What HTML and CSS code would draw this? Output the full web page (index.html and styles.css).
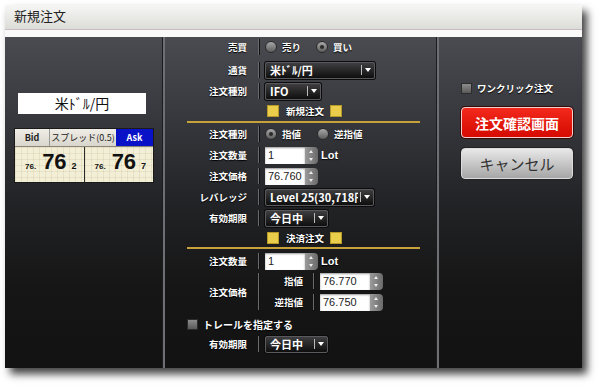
FILE: index.html
```html
<!DOCTYPE html>
<html lang="ja">
<head>
    <meta charset="UTF-8">
    <title>新規注文</title>
    <link rel="stylesheet" href="styles.css">
</head>
<body>
    <div class="window">
        <div class="titlebar">新規注文</div>
        <div class="gap"></div>
        <div class="panel">
            <!-- 左：通貨ペアとレート -->
            <div class="col col-left">
                <div class="pair-box">米ﾄﾞﾙ/円</div>
                <div class="rate">
                    <div class="rate-head">
                        <div class="rh-bid">Bid</div>
                        <div class="rh-spread">スプレッド(0.5)</div>
                        <div class="rh-ask">Ask</div>
                    </div>
                    <div class="rate-body">
                        <div class="rate-cell"><span class="r-small">76.</span><span class="r-big">76</span><span class="r-last">2</span></div>
                        <div class="rate-cell"><span class="r-small">76.</span><span class="r-big">76</span><span class="r-last">7</span></div>
                    </div>
                </div>
            </div>
            <div class="divider"></div>

            <!-- 中央：注文フォーム -->
            <div class="col col-center">
                <div class="row r1">
                    <div class="label">売買</div><div class="sep"></div>
                    <span class="radio"></span><span class="opt">売り</span>
                    <span class="radio on second"></span><span class="opt">買い</span>
                </div>
                <div class="row r2">
                    <div class="label">通貨</div><div class="sep"></div>
                    <div class="select w-pair"><span class="sel-text">米ﾄﾞﾙ/円</span><i class="sel-arrow"></i></div>
                </div>
                <div class="row">
                    <div class="label">注文種別</div><div class="sep"></div>
                    <div class="select w-ifo"><span class="sel-text">IFO</span><i class="sel-arrow"></i></div>
                </div>
                <div class="row section">
                    <span class="ysq"></span><span class="sec-title">新規注文</span><span class="ysq"></span>
                </div>
                <div class="goldline"></div>
                <div class="row">
                    <div class="label">注文種別</div><div class="sep"></div>
                    <span class="radio on"></span><span class="opt">指値</span>
                    <span class="radio second2"></span><span class="opt">逆指値</span>
                </div>
                <div class="row">
                    <div class="label">注文数量</div><div class="sep"></div>
                    <div class="num"><span class="num-val">1</span><span class="spin"></span></div>
                    <span class="unit">Lot</span>
                </div>
                <div class="row">
                    <div class="label">注文価格</div><div class="sep"></div>
                    <div class="num"><span class="num-val">76.760</span><span class="spin"></span></div>
                </div>
                <div class="row">
                    <div class="label">レバレッジ</div><div class="sep"></div>
                    <div class="select w-lev"><span class="sel-text">Level 25(30,718円)</span><i class="sel-arrow"></i></div>
                </div>
                <div class="row">
                    <div class="label">有効期限</div><div class="sep"></div>
                    <div class="select w-day"><span class="sel-text">今日中</span><i class="sel-arrow"></i></div>
                </div>
                <div class="row section s2">
                    <span class="ysq"></span><span class="sec-title">決済注文</span><span class="ysq"></span>
                </div>
                <div class="goldline"></div>
                <div class="row r11">
                    <div class="label">注文数量</div><div class="sep"></div>
                    <div class="num"><span class="num-val">1</span><span class="spin"></span></div>
                    <span class="unit">Lot</span>
                </div>
                <div class="price-group">
                    <div class="label">注文価格</div><div class="sep tall"></div>
                    <div class="sub-rows">
                        <div class="row first">
                            <div class="sublabel">指値</div><div class="sep short"></div>
                            <div class="num wide"><span class="num-val">76.770</span><span class="spin"></span></div>
                        </div>
                        <div class="row">
                            <div class="sublabel">逆指値</div><div class="sep short"></div>
                            <div class="num wide"><span class="num-val">76.750</span><span class="spin"></span></div>
                        </div>
                    </div>
                </div>
                <div class="row trail">
                    <span class="check"></span><span class="opt">トレールを指定する</span>
                </div>
                <div class="row last">
                    <div class="label">有効期限</div><div class="sep"></div>
                    <div class="select w-day"><span class="sel-text">今日中</span><i class="sel-arrow"></i></div>
                </div>
            </div>
            <div class="divider"></div>

            <!-- 右：ボタン -->
            <div class="col col-right">
                <div class="oneclick"><span class="check"></span><span class="opt">ワンクリック注文</span></div>
                <button class="btn btn-confirm">注文確認画面</button>
                <button class="btn btn-cancel">キャンセル</button>
            </div>
        </div>
    </div>
</body>
</html>
```

FILE: styles.css
```css
body {
    margin: 0;
    min-height: 100vh;
    background-color: #ffffff;
    font-family: "Noto Sans CJK JP", "Liberation Sans", sans-serif;
}
.window {
    width: 577px;
    margin: 5px 0 0 5px;
    box-shadow: 5px 6px 8px rgba(0, 0, 0, 0.75);
}
.titlebar {
    height: 24px;
    line-height: 22px;
    padding-left: 9px;
    font-size: 13px;
    color: #222;
    background: linear-gradient(#f6f6f4, #dcdcd8);
    border-bottom: 1px solid #c9bcc4;
}
.gap {
    height: 7px;
    background-color: #f9f9f9;
}
.panel {
    display: flex;
    height: 331px;
    background: linear-gradient(#4a4b50 0%, #393a3f 22%, #222326 50%, #161616 75%, #121212 100%);
}
.col {
    height: 100%;
    box-sizing: border-box;
    flex-shrink: 0;
}
.col-left {
    width: 158px;
}
.col-center {
    width: 272px;
}
.col-right {
    width: 143px;
}
.divider {
    width: 2px;
    flex-shrink: 0;
    background-color: #6e6f74;
    box-shadow: -1px 0 0 #1c1c1e;
}

/* 左カラム */
.pair-box {
    margin: 56px 0 0 13px;
    width: 128px;
    height: 21px;
    line-height: 21px;
    background-color: #fff;
    text-align: center;
    font-size: 14px;
    color: #111;
}
.rate {
    margin: 14px 0 0 9px;
    width: 138px;
    border: 1px solid #1a1a1a;
}
.rate-head {
    display: flex;
    height: 17px;
    line-height: 17px;
    font-size: 9px;
    font-weight: bold;
    color: #222;
    background: linear-gradient(#efede6, #d9d6cc);
    border-bottom: 1px solid #8a8676;
}
.rh-bid {
    width: 34px;
    text-align: center;
    border-right: 1px solid #999;
}
.rh-spread {
    width: 66px;
    text-align: center;
    font-weight: normal;
}
.rh-ask {
    flex: 1;
    text-align: center;
    color: #fff;
    background-color: #0a12c8;
}
.rate-body {
    display: flex;
    height: 35px;
}
.rate-cell {
    flex: 1;
    display: flex;
    align-items: baseline;
    padding: 2px 0 0 10px;
    background-color: #f3efd7;
    background-image: linear-gradient(rgba(160, 150, 110, 0.15) 1px, transparent 1px), linear-gradient(90deg, rgba(160, 150, 110, 0.15) 1px, transparent 1px);
    background-size: 6px 6px;
    color: #111;
    font-family: "Liberation Sans", sans-serif;
    font-weight: bold;
}
.rate-cell + .rate-cell {
    border-left: 1px solid #2a2a2a;
}
.r-small {
    font-size: 8px;
}
.r-big {
    font-size: 22px;
    margin-left: 6px;
}
.r-last {
    font-size: 9px;
    margin-left: 5px;
}

/* 中央カラム */
.row {
    display: flex;
    align-items: center;
    height: 20px;
    margin-top: 1px;
    font-size: 9.5px;
    font-weight: bold;
    color: #fff;
}
.r1 {
    margin-top: 0;
}
.r2 {
    margin-top: 3px;
}
.r11 {
    margin-top: 2px;
}
.label {
    width: 82px;
    flex-shrink: 0;
    text-align: right;
    font-size: 9.5px;
    font-weight: bold;
    color: #fff;
    text-shadow: 0 1px 1px #000;
}
.sep {
    width: 1px;
    height: 16px;
    flex-shrink: 0;
    margin: 0 6px 0 11px;
    background-color: #6a6a6e;
    box-shadow: 1px 0 0 #111;
}
.opt {
    margin-left: 5px;
    white-space: nowrap;
    text-shadow: 0 1px 1px #000;
}
.radio {
    width: 10px;
    height: 10px;
    flex-shrink: 0;
    border-radius: 50%;
    border: 1px solid #2a2a2a;
    background: linear-gradient(#a8a8a8, #5c5c5c);
    position: relative;
}
.radio.on::after {
    content: "";
    position: absolute;
    left: 3px;
    top: 3px;
    width: 4px;
    height: 4px;
    border-radius: 50%;
    background-color: #2a2a2a;
}
.radio.second {
    margin-left: 15px;
}
.radio.second2 {
    margin-left: 16px;
}
.select {
    display: flex;
    align-items: center;
    height: 15px;
    padding-left: 4px;
    border: 1px solid #5a5a5e;
    border-radius: 2px;
    box-shadow: 0 0 0 1px #0c0c0c;
    background: linear-gradient(#3e3e40, #0e0e0e);
    color: #fff;
    font-size: 11px;
    font-weight: bold;
    overflow: hidden;
}
.sel-text {
    flex: 1;
    white-space: nowrap;
    overflow: hidden;
}
.sel-arrow {
    position: relative;
    flex-shrink: 0;
    width: 12px;
    height: 10px;
    border-left: 1px solid #bbb;
    margin-left: 2px;
}
.sel-arrow::after {
    content: "";
    position: absolute;
    left: 3px;
    top: 3px;
    border-left: 3px solid transparent;
    border-right: 3px solid transparent;
    border-top: 4px solid #fff;
}
.w-pair {
    width: 104px;
}
.w-ifo {
    width: 50px;
}
.w-lev {
    width: 103px;
}
.w-day {
    width: 57px;
}
.section {
    height: 18px;
    margin-top: 1px;
    padding-left: 102px;
}
.s2 {
    height: 17px;
}
.ysq {
    width: 12px;
    height: 12px;
    background-color: #ebcd4c;
    border: 1px solid #b59a2a;
    box-sizing: border-box;
}
.sec-title {
    margin: 0 6px 0 7px;
    text-shadow: 0 1px 1px #000;
}
.goldline {
    height: 2px;
    margin: 1px 17px 0 22px;
    background-color: #c7a23a;
}
.num {
    display: flex;
    height: 17px;
}
.num-val {
    width: 37px;
    padding-left: 3px;
    background-color: #fff;
    color: #222;
    font-family: "Liberation Sans", sans-serif;
    font-size: 11px;
    font-weight: normal;
    line-height: 17px;
    white-space: nowrap;
    box-shadow: inset 0 1px 2px rgba(0, 0, 0, 0.4);
}
.num.wide .num-val {
    width: 47px;
}
.spin {
    position: relative;
    width: 13px;
    border-radius: 0 4px 4px 0;
    background: linear-gradient(90deg, #9a9a9a, #6a6a6a);
}
.spin::before, .spin::after {
    content: "";
    position: absolute;
    left: 4px;
    border-left: 2.5px solid transparent;
    border-right: 2.5px solid transparent;
}
.spin::before {
    top: 3px;
    border-bottom: 3px solid #eee;
}
.spin::after {
    bottom: 3px;
    border-top: 3px solid #eee;
}
.unit {
    margin-left: 3px;
    font-family: "Liberation Sans", sans-serif;
    font-size: 11px;
    text-shadow: 0 1px 1px #000;
}
.price-group {
    display: flex;
    align-items: center;
}
.sep.tall {
    height: 37px;
}
.sub-rows {
    display: flex;
    flex-direction: column;
}
.sub-rows .row.first {
    margin-top: 0;
}
.sublabel {
    width: 38px;
    text-align: right;
    text-shadow: 0 1px 1px #000;
}
.sep.short {
    margin: 0 6px 0 10px;
}
.trail {
    margin-top: 2px;
    padding-left: 22px;
    font-size: 10px;
}
.row.last {
    margin-top: 0;
}
.check {
    width: 11px;
    height: 11px;
    flex-shrink: 0;
    box-sizing: border-box;
    border: 1px solid #2c2c2c;
    background: linear-gradient(#8c8c8c, #5a5a5a);
}

/* 右カラム */
.col-right {
    padding-left: 22px;
}
.oneclick {
    display: flex;
    align-items: center;
    margin-top: 44px;
    font-size: 9.5px;
    font-weight: bold;
    color: #fff;
}
.btn {
    display: block;
    width: 112px;
    height: 31px;
    border-radius: 4px;
    font-family: "Noto Sans CJK JP", "Liberation Sans", sans-serif;
    font-size: 14px;
    cursor: pointer;
    padding: 0;
}
.btn-confirm {
    margin-top: 12px;
    color: #fff;
    font-weight: bold;
    background: linear-gradient(#f2291c, #d60a00);
    border: 1px solid #f0d0cc;
    box-shadow: 0 0 0 1px #3a0a08;
}
.btn-cancel {
    margin-top: 10px;
    color: #333;
    font-size: 15px;
    background: linear-gradient(#e8e8e8, #a6a6a6);
    border: 1px solid #dcdcdc;
    box-shadow: 0 0 0 1px #222;
}
```
